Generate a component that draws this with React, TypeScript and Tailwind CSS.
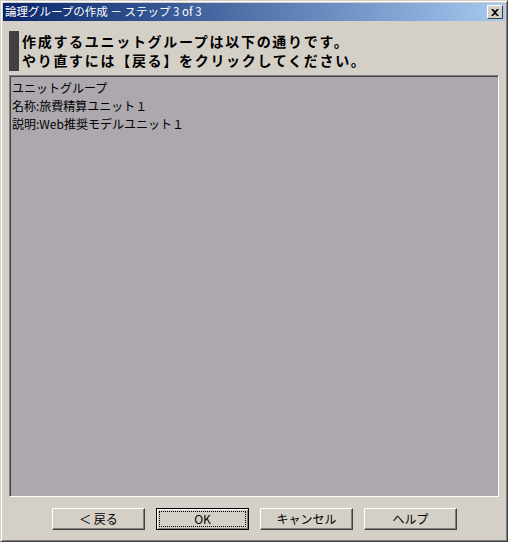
import { ReactNode } from "react";

const font = { fontFamily: '"Noto Sans CJK JP", "Liberation Sans", sans-serif' };

function Button({ text, focused }: { text: string; focused?: boolean }): ReactNode {
    return (
        <button
            className={
                "w-[93px] h-[22px] bg-[#d4d0c8] text-[12px] text-black flex items-center justify-center p-[2px] " +
                (focused
                    ? "border border-black shadow-[inset_1px_1px_0_#fff,inset_-1px_-1px_0_#808080]"
                    : "border-t border-l border-t-white border-l-white border-r border-b border-r-[#404040] border-b-[#404040] shadow-[inset_-1px_-1px_0_#808080]")
            }
        >
            <span className={"w-full h-full flex items-center justify-center leading-none " + (focused ? "border border-dotted border-black" : "")}>
                {text}
            </span>
        </button>
    );
}

export default function App(): ReactNode {
    return (
        <div
            className="w-[508px] h-[542px] bg-[#d4d0c8] flex flex-col border border-t-[#d4d0c8] border-l-[#d4d0c8] border-r-[#404040] border-b-[#404040] shadow-[inset_1px_1px_0_#fff,inset_-1px_-1px_0_#808080] p-[2px]"
            style={font}
        >
            <div className="h-[18px] bg-gradient-to-r from-[#0a246a] to-[#a6caf0] flex items-center justify-between pl-[2px] pr-[2px]">
                <span className="text-white text-[11.5px] leading-none">論理グループの作成 － ステップ 3 of 3</span>
                <div className="w-[16px] h-[14px] bg-[#d4d0c8] border-t border-l border-white border-r border-b border-r-[#404040] border-b-[#404040] flex items-center justify-center">
                    <svg width="8" height="7" viewBox="0 0 8 7">
                        <path d="M0 0h2l2 2 2-2h2L5 3.5 8 7H6L4 5 2 7H0l3-3.5z" fill="black" />
                    </svg>
                </div>
            </div>
            <div className="flex gap-[3px] mt-[10px] ml-[6px]">
                <div className="w-[10px] h-[40px] bg-[#404040]" />
                <div className="text-[14px] font-bold leading-[19px] tracking-[1.7px] text-black pt-[1px]">
                    <div>作成するユニットグループは以下の通りです。</div>
                    <div>やり直すには【戻る】をクリックしてください。</div>
                </div>
            </div>
            <div className="mx-[6px] mt-[4px] h-[422px] bg-[#aca8ae] border-t border-l border-t-[#808080] border-l-[#808080] border-r border-b border-r-white border-b-white shadow-[inset_1px_1px_0_#404040] px-[2px] pt-[3px] text-[12px] leading-[18px] text-black">
                <div>ユニットグループ</div>
                <div>名称:旅費精算ユニット１</div>
                <div>説明:Web推奨モデルユニット１</div>
            </div>
            <div className="flex justify-center gap-[11px] mt-[11px] pl-[1px]">
                <Button text="＜ 戻る" />
                <Button text="OK" focused />
                <Button text="キャンセル" />
                <Button text="ヘルプ" />
            </div>
        </div>
    );
}
